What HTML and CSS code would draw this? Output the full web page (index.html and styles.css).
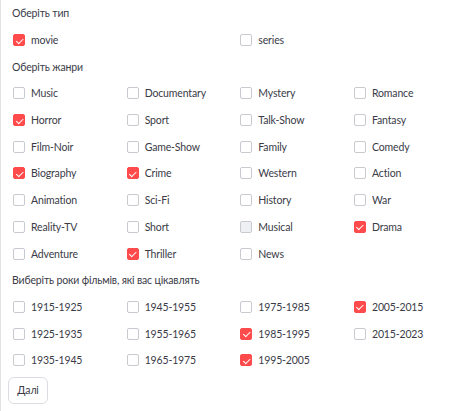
FILE: index.html
```html
<!DOCTYPE html>
<html lang="uk">
<head>
<meta charset="utf-8">
<link rel="stylesheet" href="styles.css">
</head>
<body>
<div class="page">
  <div class="label">Оберіть тип</div>
  <div class="grid two">
    <label class="opt"><span class="box on"></span>movie</label>
    <label class="opt"><span class="box"></span>series</label>
  </div>

  <div class="label">Оберіть жанри</div>
  <div class="grid four">
    <label class="opt"><span class="box"></span>Music</label>
    <label class="opt"><span class="box"></span>Documentary</label>
    <label class="opt"><span class="box"></span>Mystery</label>
    <label class="opt"><span class="box"></span>Romance</label>

    <label class="opt"><span class="box on"></span>Horror</label>
    <label class="opt"><span class="box"></span>Sport</label>
    <label class="opt"><span class="box"></span>Talk-Show</label>
    <label class="opt"><span class="box"></span>Fantasy</label>

    <label class="opt"><span class="box"></span>Film-Noir</label>
    <label class="opt"><span class="box"></span>Game-Show</label>
    <label class="opt"><span class="box"></span>Family</label>
    <label class="opt"><span class="box"></span>Comedy</label>

    <label class="opt"><span class="box on"></span>Biography</label>
    <label class="opt"><span class="box on"></span>Crime</label>
    <label class="opt"><span class="box"></span>Western</label>
    <label class="opt"><span class="box"></span>Action</label>

    <label class="opt"><span class="box"></span>Animation</label>
    <label class="opt"><span class="box"></span>Sci-Fi</label>
    <label class="opt"><span class="box"></span>History</label>
    <label class="opt"><span class="box"></span>War</label>

    <label class="opt"><span class="box"></span>Reality-TV</label>
    <label class="opt"><span class="box"></span>Short</label>
    <label class="opt"><span class="box hover"></span>Musical</label>
    <label class="opt"><span class="box on"></span>Drama</label>

    <label class="opt"><span class="box"></span>Adventure</label>
    <label class="opt"><span class="box on"></span>Thriller</label>
    <label class="opt"><span class="box"></span>News</label>
    <span></span>
  </div>

  <div class="label">Виберіть роки фільмів, які вас цікавлять</div>
  <div class="grid four">
    <label class="opt"><span class="box"></span>1915-1925</label>
    <label class="opt"><span class="box"></span>1945-1955</label>
    <label class="opt"><span class="box"></span>1975-1985</label>
    <label class="opt"><span class="box on"></span>2005-2015</label>

    <label class="opt"><span class="box"></span>1925-1935</label>
    <label class="opt"><span class="box"></span>1955-1965</label>
    <label class="opt"><span class="box on"></span>1985-1995</label>
    <label class="opt"><span class="box"></span>2015-2023</label>

    <label class="opt"><span class="box"></span>1935-1945</label>
    <label class="opt"><span class="box"></span>1965-1975</label>
    <label class="opt"><span class="box on"></span>1995-2005</label>
    <span></span>
  </div>

  <button class="btn">Далі</button>
</div>
</body>
</html>
```
FILE: styles.css
```css
html, body {
  margin: 0;
  padding: 0;
  background: #ffffff;
}
body {
  font-family: Lato, "Noto Sans", sans-serif;
  font-size: 10.5px;
  letter-spacing: -0.15px;
  color: #3a3b47;
  border-left: 1px solid #e3e3e6;
  min-height: 411px;
  box-sizing: border-box;
}
.page {
  padding-left: 11px;
}
.label {
  height: 26.7px;
  display: flex;
  align-items: center;
}
.grid {
  display: grid;
  padding-left: 1px;
}
.grid.two {
  grid-template-columns: repeat(2, 227.3px);
}
.grid.four {
  grid-template-columns: repeat(4, 113.67px);
}
.opt {
  height: 26.7px;
  display: flex;
  align-items: center;
  gap: 6px;
  white-space: nowrap;
}
.box {
  width: 12px;
  height: 12px;
  box-sizing: border-box;
  border: 1px solid #c9cad0;
  border-radius: 2px;
  background: #fff;
  flex: none;
  position: relative;
}
.box.hover {
  background: #eef0f4;
}
.box.on {
  background: #ff4b4b;
  border-color: #ff4b4b;
}
.box.on::after {
  content: "";
  position: absolute;
  left: 3.5px;
  top: 1.5px;
  width: 3px;
  height: 5.5px;
  border-right: 1.6px solid #fff;
  border-bottom: 1.6px solid #fff;
  transform: rotate(45deg);
}
.btn {
  margin-top: 3px;
  margin-left: -4px;
  width: 40px;
  height: 27px;
  padding: 0;
  font-family: inherit;
  font-size: 10.5px;
  letter-spacing: -0.15px;
  color: #3a3b47;
  background: #fff;
  border: 1px solid #dcdde2;
  border-radius: 6px;
}
```
